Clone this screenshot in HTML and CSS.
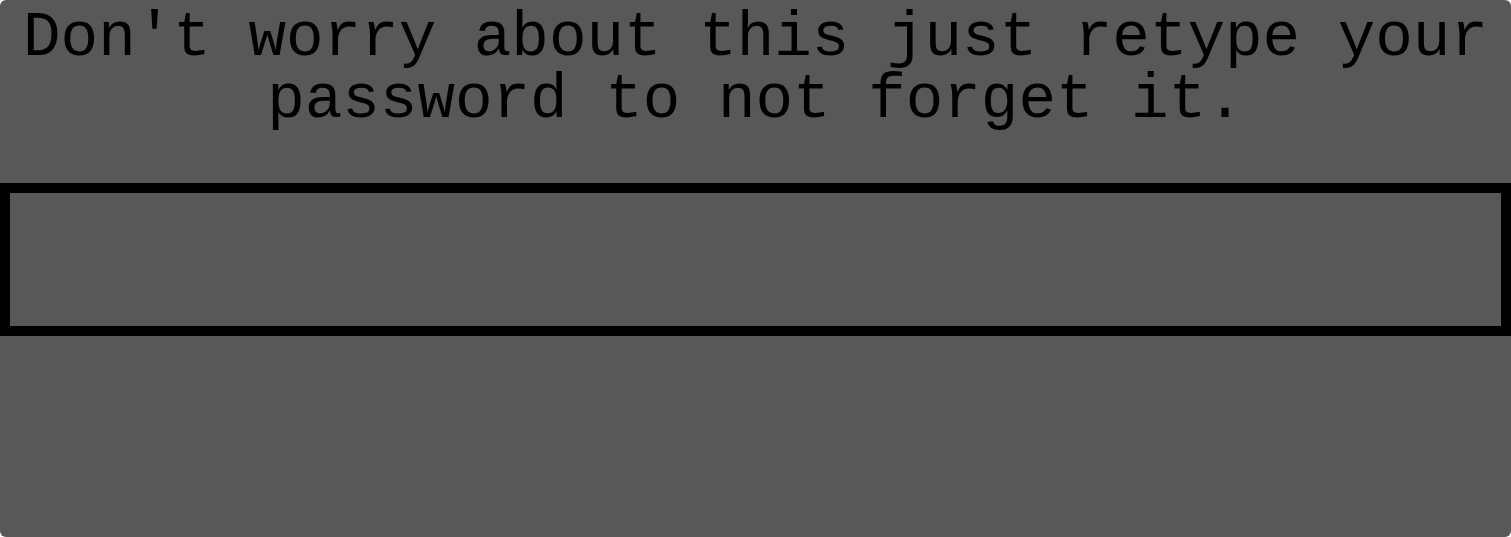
FILE: index.html
```html
<!DOCTYPE html>
<html lang="en">
<head>
<meta charset="utf-8">
<title>Retype password</title>
<link rel="stylesheet" href="styles.css">
</head>
<body>
<main class="panel">
  <p class="message">Don't worry about this just retype your password to not forget it.</p>
  <input class="field" type="password" aria-label="Retype password">
</main>
</body>
</html>
```
FILE: styles.css
```css
html, body {
  margin: 0;
  padding: 0;
  background: #ffffff;
}
.panel {
  box-sizing: border-box;
  width: 1511px;
  height: 537px;
  background: #585858;
  border-radius: 6px;
  padding-top: 8px;
  display: flex;
  flex-direction: column;
  overflow: hidden;
}
.message {
  margin: 0 auto;
  width: 1490px;
  text-align: center;
  font-family: "Liberation Mono", "DejaVu Sans Mono", monospace;
  font-size: 62.6px;
  line-height: 62px;
  color: #000;
}
.field {
  box-sizing: border-box;
  display: block;
  margin-top: 51px;
  width: 100%;
  height: 153px;
  border: 10px solid #000;
  background: #585858;
  outline: none;
  padding: 0;
}
```
